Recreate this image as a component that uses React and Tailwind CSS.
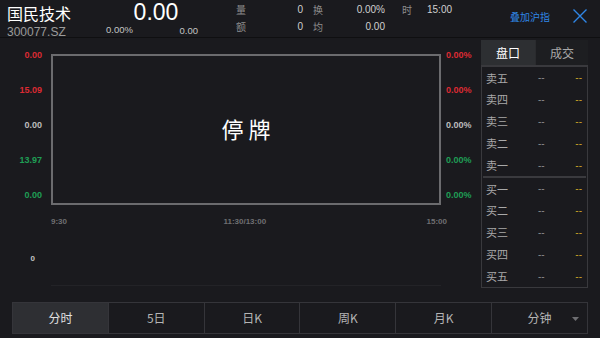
import React from "react";

const F = { fontFamily: '"Liberation Sans", "Noto Sans CJK SC", sans-serif' };
const CJK = { fontFamily: '"Noto Sans CJK SC", "Liberation Sans", sans-serif' };

const RED = "text-[#dc2a33]";
const GREEN = "text-[#1f9e55]";
const GRAY = "text-[#bdbdbd]";

const leftLabels = [
  ["0.00", RED],
  ["15.09", RED],
  ["0.00", GRAY],
  ["13.97", GREEN],
  ["0.00", GREEN],
];
const rightLabels = [
  ["0.00%", RED],
  ["0.00%", RED],
  ["0.00%", GRAY],
  ["0.00%", GREEN],
  ["0.00%", GREEN],
];

const sells = ["卖五", "卖四", "卖三", "卖二", "卖一"];
const buys = ["买一", "买二", "买三", "买四", "买五"];

function Row({ label }) {
  return (
    <div className="h-[22px] flex items-center pl-[4px] pr-[5px]">
      <span className="text-[11px] text-[#a9a9a9] w-[52px]" style={CJK}>{label}</span>
      <span className="text-[10px] text-[#8a8a8a] w-[30px]" style={F}>--</span>
      <span className="flex-1 text-right text-[10px] text-[#c9a227]" style={F}>--</span>
    </div>
  );
}

const tabs = ["分时", "5日", "日K", "周K", "月K", "分钟"];

export default function App() {
  return (
    <div className="w-[600px] h-[338px] bg-[#1a1a1e] flex flex-col overflow-hidden" style={F}>
      {/* Header */}
      <div className="h-[38px] flex border-b border-[#0f0f11] shrink-0">
        <div className="w-[106px] pl-[7px] pt-[3px]">
          <div className="text-[16px] leading-[21px] text-white" style={CJK}>国民技术</div>
          <div className="text-[12px] leading-[14px] text-[#9b9b9b] pt-[1px]">300077.SZ</div>
        </div>
        <div className="w-[92px] flex flex-col">
          <div className="text-[23px] leading-[24px] text-white text-center font-light pl-[8px]">0.00</div>
          <div className="flex justify-between text-[9.5px] leading-[12px] text-[#c4c4c4] pt-[0px]">
            <span>0.00%</span>
            <span className="pt-[1px]">0.00</span>
          </div>
        </div>
        <div className="w-[38px]" />
        <div className="w-[67px] flex flex-col pt-[2px] text-[10px] text-[#d0d0d0]">
          <div className="h-[14px] flex items-center justify-between"><span className="text-[#8d8d8d]" style={CJK}>量</span><span>0</span></div>
          <div className="h-[3px]" />
          <div className="h-[14px] flex items-center justify-between"><span className="text-[#8d8d8d]" style={CJK}>额</span><span>0</span></div>
        </div>
        <div className="w-[10px]" />
        <div className="w-[72px] flex flex-col pt-[2px] text-[10px] text-[#d0d0d0]">
          <div className="h-[14px] flex items-center justify-between"><span className="text-[#8d8d8d]" style={CJK}>换</span><span>0.00%</span></div>
          <div className="h-[3px]" />
          <div className="h-[14px] flex items-center justify-between"><span className="text-[#8d8d8d]" style={CJK}>均</span><span>0.00</span></div>
        </div>
        <div className="w-[17px]" />
        <div className="flex flex-col pt-[2px] text-[10px] text-[#d0d0d0]">
          <div className="h-[14px] flex items-center"><span className="text-[#8d8d8d] w-[25px]" style={CJK}>时</span><span>15:00</span></div>
        </div>
        <div className="flex-1" />
        <div className="flex items-center pr-[12px] pb-[4px]">
          <span className="text-[10px] text-[#2f86e6] mr-[22px]" style={CJK}>叠加沪指</span>
          <svg width="16" height="16" viewBox="0 0 16 16" className="mb-[2px]">
            <path d="M1.5 1.5 L14.5 14.5 M14.5 1.5 L1.5 14.5" stroke="#2f86e6" strokeWidth="1.4" fill="none" />
          </svg>
        </div>
      </div>

      {/* Main */}
      <div className="h-[260px] flex shrink-0">
        <div className="w-[481px] flex flex-col">
          <div className="flex">
            <div className="w-[51px] pr-[9px] flex flex-col">
              {leftLabels.map(([t, c], i) => (
                <div key={i} className={`h-[35px] flex items-center justify-end text-[9px] font-bold ${c}`}>{t}</div>
              ))}
            </div>
            <div className="w-[390px] pt-[16px]">
              <div className="h-[151px] border-2 border-[#6b6b6e] flex items-center justify-center">
                <span className="text-[22px] text-white tracking-[5px] pl-[5px] pb-[2px]" style={CJK}>停牌</span>
              </div>
            </div>
            <div className="pl-[5px] flex flex-col">
              {rightLabels.map(([t, c], i) => (
                <div key={i} className={`h-[35px] flex items-center text-[9px] font-bold ${c}`}>{t}</div>
              ))}
            </div>
          </div>
          <div className="h-[18px] ml-[51px] w-[396px] flex items-center justify-between text-[8px] font-bold text-[#6f6f72]">
            <span>9:30</span>
            <span className="pr-[4px]">11:30/13:00</span>
            <span>15:00</span>
          </div>
          <div className="flex h-[54px] items-center pt-[2px]">
            <div className="w-[35px] text-right text-[8px] font-bold text-[#c4c4c4]">0</div>
          </div>
          <div className="ml-[51px] w-[390px] h-px bg-[#232327]" />
        </div>
        <div className="w-[107px] pt-[2px] flex flex-col">
          <div className="h-[25px] flex shrink-0">
            <div className="w-[54px] bg-[#2d2f32] flex items-center justify-center text-[12px] text-white" style={CJK}>盘口</div>
            <div className="flex-1 bg-[#1d1e21] flex items-center justify-center text-[12px] text-[#a8a8a8] border-l border-[#2a2b2e]" style={CJK}>成交</div>
          </div>
          <div className="h-[223px] border border-[#39393d] border-t-2 flex flex-col">
            {sells.map((s) => <Row key={s} label={s} />)}
            <div className="h-[2px] bg-[#3a3a3e] mx-[1px]" />
            {buys.map((s) => <Row key={s} label={s} />)}
          </div>
        </div>
      </div>

      {/* Bottom tabs */}
      <div className="mx-[12px] mt-[4px] h-[32px] flex border border-[#35353a]">
        {tabs.map((t, i) => (
          <div
            key={t}
            className={`flex-1 relative flex items-center justify-center text-[12px] ${i === 0 ? "bg-[#2e2f33] text-[#e0e0e0]" : "text-[#b5b5b5]"} ${i > 0 ? "border-l border-[#35353a]" : ""}`}
            style={CJK}
          >
            {t}
            {i === 5 && (
              <svg width="7" height="4" viewBox="0 0 7 4" className="absolute right-[8px] top-[14px]">
                <path d="M0 0 L7 0 L3.5 4 Z" fill="#6e6e72" />
              </svg>
            )}
          </div>
        ))}
      </div>
    </div>
  );
}
